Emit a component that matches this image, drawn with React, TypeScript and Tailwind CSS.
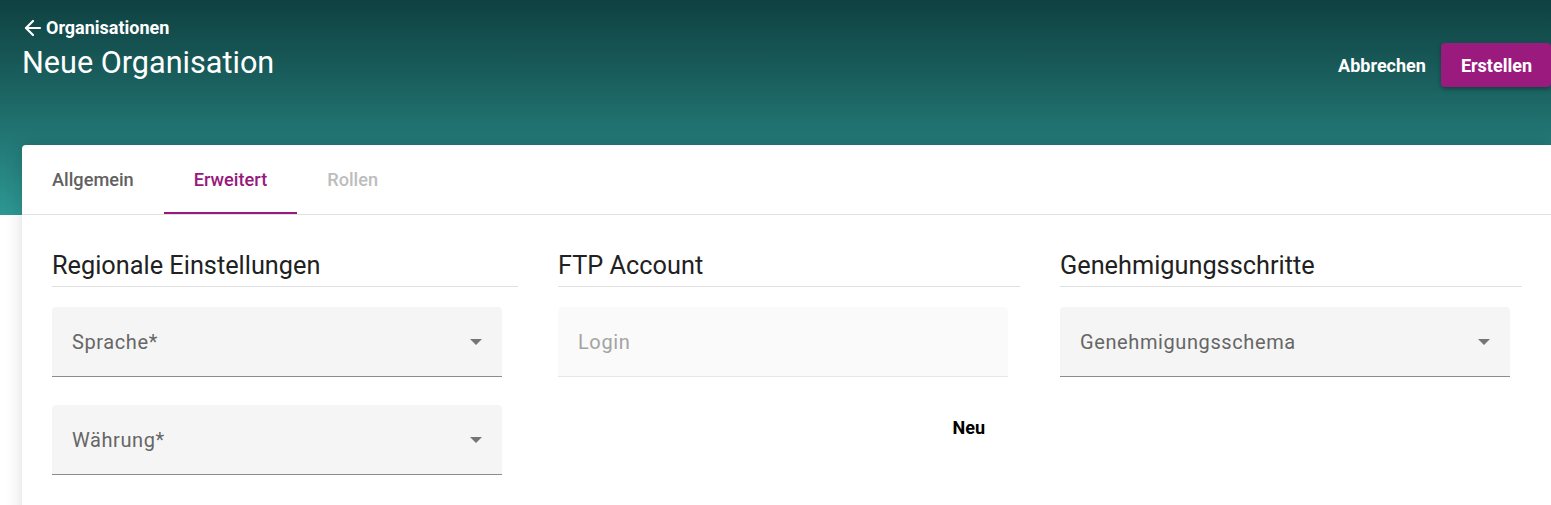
import React, { useState } from 'react';
import { ArrowLeft } from 'lucide-react';

type Tab = 'allgemein' | 'erweitert' | 'rollen';

const font = { fontFamily: 'Roboto, "Noto Sans", sans-serif' };

const SelectField: React.FC<{ label: string }> = ({ label }) => (
  <div className="w-[450px] h-[70px] flex items-center justify-between rounded-t-[4px] bg-[#f5f5f5] border-b border-[#8c8c8c] pl-[20px] pr-[20px] cursor-pointer">
    <span className="text-[20px] tracking-[0.6px] text-[#666666]">{label}</span>
    <svg width="12" height="6" viewBox="0 0 12 6">
      <path d="M0 0 L6 6 L12 0 Z" fill="#757575" />
    </svg>
  </div>
);

const SectionTitle: React.FC<{ title: string }> = ({ title }) => (
  <div className="pb-[4px] border-b border-[#e0e0e0]">
    <h2 className="text-[25.3px] leading-[32px] text-[#212121]">{title}</h2>
  </div>
);

export default function App() {
  const [activeTab, setActiveTab] = useState<Tab>('erweitert');

  const tabs: { id: Tab; label: string; disabled?: boolean }[] = [
    { id: 'allgemein', label: 'Allgemein' },
    { id: 'erweitert', label: 'Erweitert' },
    { id: 'rollen', label: 'Rollen', disabled: true },
  ];

  return (
    <div className="min-h-screen bg-white" style={font}>
      {/* header */}
      <div className="h-[215px] bg-linear-to-b from-[#0f4141] to-[#2d9793] flex justify-between">
        <div className="pl-[22px] pt-[17px] text-white">
          <a href="#" className="flex items-center gap-[1px] h-[22px] -ml-[1px]">
            <ArrowLeft size={24} strokeWidth={2.2} />
            <span className="text-[18px] font-bold leading-[22px]">Organisationen</span>
          </a>
          <h1 className="mt-[6px] text-[30.6px] leading-[36px]">Neue Organisation</h1>
        </div>
        <div className="flex items-start pt-[43px]">
          <button className="h-[44px] px-[15px] text-white text-[18px] font-bold">Abbrechen</button>
          <button className="h-[44px] pl-[20px] pr-[19px] rounded-[4px] bg-[#9a1a7d] text-white text-[18px] font-bold shadow-[0_2px_4px_rgba(0,0,0,0.35)]">
            Erstellen
          </button>
        </div>
      </div>

      {/* card */}
      <div className="-mt-[70px] ml-[22px] bg-white rounded-tl-[4px] shadow-[0_0_18px_rgba(0,0,0,0.14)] min-h-[400px]">
        <div className="h-[70px] flex border-b border-[#e0e0e0]">
          {tabs.map(t => (
            <button
              key={t.id}
              disabled={t.disabled}
              onClick={() => setActiveTab(t.id)}
              className={`relative px-[30px] h-full text-[18.2px] font-medium ${
                t.disabled ? 'text-[#bdbdbd]' : activeTab === t.id ? 'text-[#98187b]' : 'text-[#616161]'
              }`}
            >
              {t.label}
              {activeTab === t.id && <span className="absolute left-0 right-0 bottom-0 h-[2px] bg-[#98187b]" />}
            </button>
          ))}
        </div>

        <div className="px-[30px] pt-[35px] grid grid-cols-[466px_462px_462px] gap-x-[40px]">
          <div>
            <SectionTitle title="Regionale Einstellungen" />
            <div className="mt-[20px]">
              <SelectField label="Sprache*" />
            </div>
            <div className="mt-[28px]">
              <SelectField label="Währung*" />
            </div>
          </div>

          <div>
            <SectionTitle title="FTP Account" />
            <div className="mt-[20px] w-[450px] h-[70px] flex items-center rounded-t-[4px] bg-[#fafafa] border-b border-[#e6e6e6] px-[20px]">
              <span className="text-[20px] tracking-[0.6px] text-[#a3a3a3]">Login</span>
            </div>
            <div className="w-[450px] flex justify-end mt-[32px]">
              <button className="h-[36px] px-[23px] text-[18px] font-bold text-black">Neu</button>
            </div>
          </div>

          <div>
            <SectionTitle title="Genehmigungsschritte" />
            <div className="mt-[20px]">
              <SelectField label="Genehmigungsschema" />
            </div>
          </div>
        </div>
      </div>
    </div>
  );
}
